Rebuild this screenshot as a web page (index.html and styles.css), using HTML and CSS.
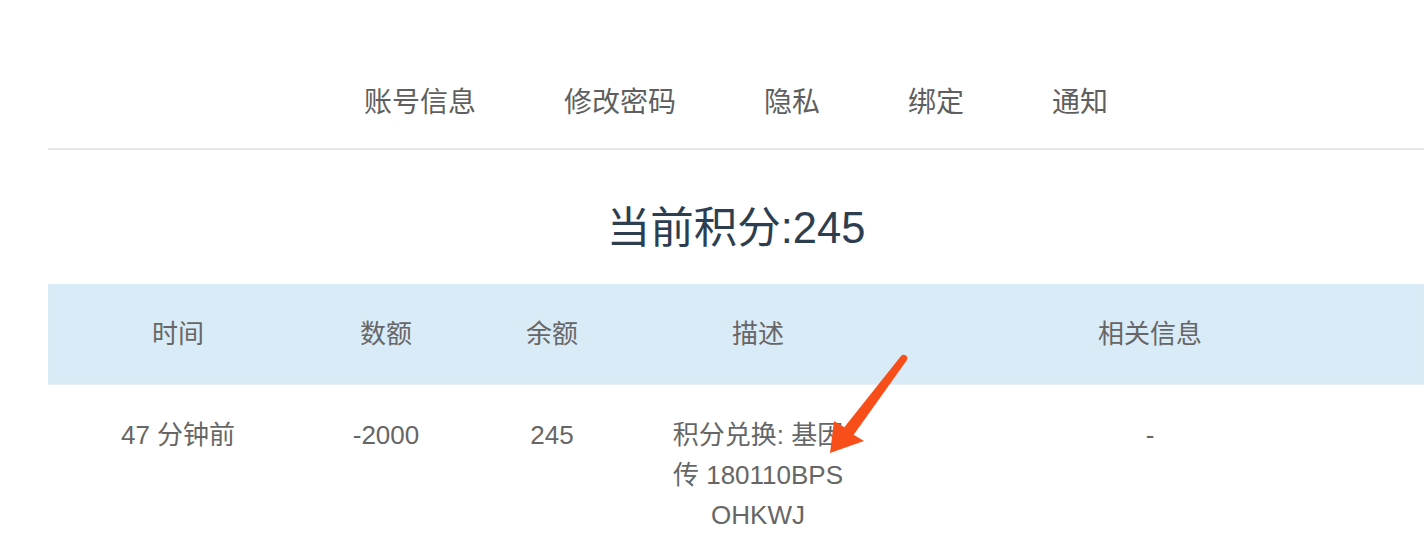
FILE: index.html
```html
<!DOCTYPE html>
<html lang="zh-CN">
<head>
<meta charset="utf-8">
<title>当前积分</title>
<link rel="stylesheet" href="styles.css">
</head>
<body>
<div class="page">
  <nav class="tabs">
    <a class="tab">账号信息</a>
    <a class="tab">修改密码</a>
    <a class="tab">隐私</a>
    <a class="tab">绑定</a>
    <a class="tab">通知</a>
  </nav>
  <h1 class="score">当前积分:245</h1>
  <table class="log">
    <colgroup>
      <col class="c-time"><col class="c-amount"><col class="c-balance"><col class="c-desc"><col>
    </colgroup>
    <thead>
      <tr><th>时间</th><th>数额</th><th>余额</th><th>描述</th><th>相关信息</th></tr>
    </thead>
    <tbody>
      <tr>
        <td>47 分钟前</td>
        <td>-2000</td>
        <td>245</td>
        <td class="desc">积分兑换: 基因传 180110BPSOHKWJ</td>
        <td>-</td>
      </tr>
    </tbody>
  </table>
  <svg class="arrow" width="100" height="110" viewBox="820 350 100 110" aria-hidden="true">
    <path d="M901.2 355.8 L844.3 427.3 L834 421 L830 453 L864 441 L853.7 434.7 L906.8 360.2 A3.6 3.6 0 0 0 901.2 355.8 Z" fill="#f84f1a"/>
  </svg>
</div>
</body>
</html>
```
FILE: styles.css
```css
html, body {
  margin: 0;
  padding: 0;
  background: #ffffff;
}
body {
  font-family: "Liberation Sans", "Noto Sans CJK SC", sans-serif;
  color: #666666;
}
.page {
  position: relative;
  padding: 0 4px 0 48px;
}
.tabs {
  display: flex;
  justify-content: center;
  gap: 88px;
  padding: 83px 0 25px;
  border-bottom: 2px solid #e6e6e6;
}
.tab {
  font-size: 28px;
  line-height: 40px;
  color: #5f5f5f;
  text-decoration: none;
}
.score {
  margin: 48px 0 26px;
  text-align: center;
  font-size: 43.5px;
  line-height: 60px;
  font-weight: 400;
  color: #2c3e50;
}
.log {
  width: 100%;
  border-collapse: collapse;
  table-layout: fixed;
}
.c-time { width: 260px; }
.c-amount { width: 156px; }
.c-balance { width: 176px; }
.c-desc { width: 236px; }
.log th {
  background: #d9ebf7;
  font-weight: 400;
  font-size: 26px;
  line-height: 40px;
  padding: 30px 0;
  color: #666666;
  border-bottom: 1px solid #e6eef4;
  text-align: center;
}
.log td {
  font-size: 26px;
  line-height: 40px;
  padding: 30px 0 10px;
  text-align: center;
  vertical-align: top;
  color: #666666;
}
.log td.desc {
  padding-left: 24px;
  padding-right: 24px;
  word-break: break-all;
}
.arrow {
  position: absolute;
  left: 820px;
  top: 350px;
}
```
